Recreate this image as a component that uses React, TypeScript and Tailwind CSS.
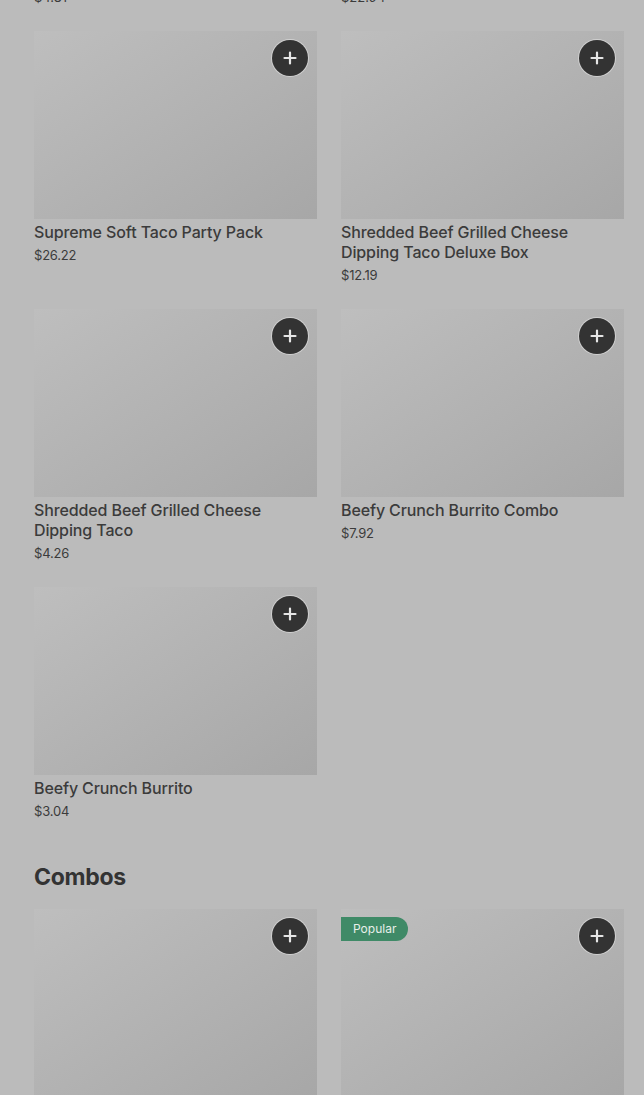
import React from "react";

type Item = { name: string; price: string; popular?: boolean };

const rows: Item[] = [
  { name: "Supreme Soft Taco Party Pack", price: "$26.22" },
  { name: "Shredded Beef Grilled Cheese Dipping Taco Deluxe Box", price: "$12.19" },
  { name: "Shredded Beef Grilled Cheese Dipping Taco", price: "$4.26" },
  { name: "Beefy Crunch Burrito Combo", price: "$7.92" },
  { name: "Beefy Crunch Burrito", price: "$3.04" },
];

const combos: Item[] = [
  { name: "Beefy Crunch Burrito Combo", price: "$7.92" },
  { name: "Cheesy Gordita Crunch Combo", price: "$9.49", popular: true },
];

function PlusButton() {
  return (
    <button className="absolute right-[9px] top-[9px] flex h-9 w-9 items-center justify-center rounded-full bg-[#333333] ring-1 ring-[#d0d0d0]">
      <svg width="14" height="14" viewBox="0 0 14 14" fill="none">
        <path d="M7 1.5v11M1.5 7h11" stroke="#e6e6e6" strokeWidth="2.2" strokeLinecap="round" />
      </svg>
    </button>
  );
}

function Card({ item }: { item: Item }) {
  return (
    <div className="flex flex-col">
      <div className="relative h-[188px] w-full bg-gradient-to-br from-[#bebebe] to-[#a7a7a7]">
        {item.popular && (
          <div className="absolute left-0 top-[8px] flex h-6 items-center rounded-r-full bg-[#3f8a67] pl-3 pr-3 text-[12px] text-[#e8efe9]">
            Popular
          </div>
        )}
        <PlusButton />
      </div>
      <div className="mt-[3px] text-[16px] font-medium leading-5 tracking-[-0.12px] text-[#3b3b3b]">{item.name}</div>
      <div className="mt-[3px] text-[13px] leading-5 tracking-[-0.2px] text-[#3b3b3b]">{item.price}</div>
    </div>
  );
}

export default function App() {
  return (
    <div
      className="min-h-[1095px] w-[644px] overflow-hidden bg-[#bbbbbb] pl-[34px] pr-[20px]"
      style={{ fontFamily: "Inter, 'Noto Sans', sans-serif" }}
    >
      <div className="-mt-[13px] grid grid-cols-2 gap-x-6 text-[13px] leading-5 text-[#3b3b3b]">
        <div>$4.81</div>
        <div>$22.94</div>
      </div>
      <div className="mt-6 grid grid-cols-2 gap-x-6 gap-y-6">
        {rows.map((it, i) => (
          <Card key={i} item={it} />
        ))}
      </div>
      <h2 className="mt-[40px] mb-[16px] text-[23px] font-bold leading-8 tracking-[-0.3px] text-[#333333]">Combos</h2>
      <div className="grid grid-cols-2 gap-x-6 gap-y-6">
        {combos.map((it, i) => (
          <Card key={i} item={it} />
        ))}
      </div>
    </div>
  );
}
